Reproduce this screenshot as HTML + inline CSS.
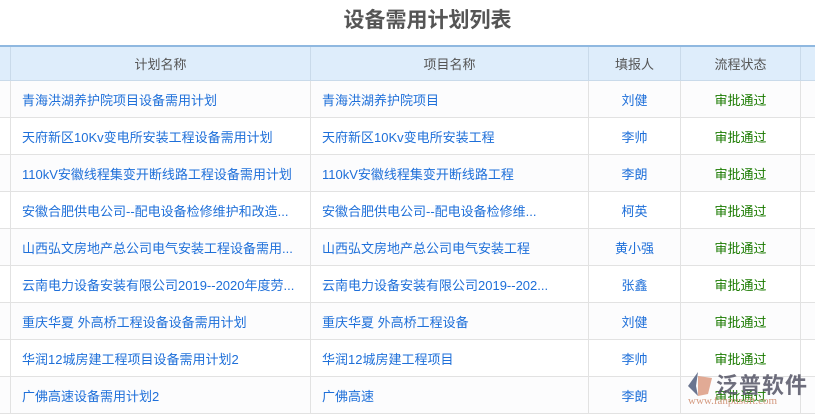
<!DOCTYPE html>
<html><head><meta charset="utf-8"><style>
body{margin:0;width:815px;height:413px;overflow:hidden;background:#fff;font-family:"Liberation Sans","Noto Sans CJK SC",sans-serif;position:relative}
.t{position:absolute;top:6px;left:0;width:855px;text-align:center;font-size:21px;font-weight:bold;color:#555;line-height:30px}
table{position:absolute;top:45px;left:-1px;width:831px;border-collapse:collapse;table-layout:fixed;font-size:13px}
td,th{height:36px;border:1px solid #e2e2e2;padding:0;white-space:nowrap;overflow:hidden}
th{background:#deedfb;font-weight:normal;color:#555;border-color:#c9daea;border-top:2px solid #8fb8e0;height:33px}
td{color:#1e6fd9}
td.l{padding-left:11px}
td.c{text-align:center}
td.g{text-align:center;color:#1a7a00}
tr:nth-child(even) td{background:#fcfcfd}
.wm{position:absolute;left:716px;top:368px;font-size:22px;color:#556;opacity:.85;font-weight:bold;letter-spacing:1px}
.wm2{position:absolute;left:688px;top:395px;font-size:11px;color:#d49a80;font-family:"Liberation Serif",serif}
</style></head><body>
<div class="t">设备需用计划列表</div>
<table>
<colgroup><col style="width:11px"><col style="width:300px"><col style="width:278px"><col style="width:92px"><col style="width:120px"><col style="width:30px"></colgroup>
<tr><th></th><th>计划名称</th><th>项目名称</th><th>填报人</th><th>流程状态</th><th></th></tr>
<tr><td></td><td class="l">青海洪湖养护院项目设备需用计划</td><td class="l">青海洪湖养护院项目</td><td class="c">刘健</td><td class="g">审批通过</td><td></td></tr>
<tr><td></td><td class="l">天府新区10Kv变电所安装工程设备需用计划</td><td class="l">天府新区10Kv变电所安装工程</td><td class="c">李帅</td><td class="g">审批通过</td><td></td></tr>
<tr><td></td><td class="l">110kV安徽线程集变开断线路工程设备需用计划</td><td class="l">110kV安徽线程集变开断线路工程</td><td class="c">李朗</td><td class="g">审批通过</td><td></td></tr>
<tr><td></td><td class="l">安徽合肥供电公司--配电设备检修维护和改造...</td><td class="l">安徽合肥供电公司--配电设备检修维...</td><td class="c">柯英</td><td class="g">审批通过</td><td></td></tr>
<tr><td></td><td class="l">山西弘文房地产总公司电气安装工程设备需用...</td><td class="l">山西弘文房地产总公司电气安装工程</td><td class="c">黄小强</td><td class="g">审批通过</td><td></td></tr>
<tr><td></td><td class="l">云南电力设备安装有限公司2019--2020年度劳...</td><td class="l">云南电力设备安装有限公司2019--202...</td><td class="c">张鑫</td><td class="g">审批通过</td><td></td></tr>
<tr><td></td><td class="l">重庆华夏 外高桥工程设备设备需用计划</td><td class="l">重庆华夏 外高桥工程设备</td><td class="c">刘健</td><td class="g">审批通过</td><td></td></tr>
<tr><td></td><td class="l">华润12城房建工程项目设备需用计划2</td><td class="l">华润12城房建工程项目</td><td class="c">李帅</td><td class="g">审批通过</td><td></td></tr>
<tr><td></td><td class="l">广佛高速设备需用计划2</td><td class="l">广佛高速</td><td class="c">李朗</td><td class="g">审批通过</td><td></td></tr>
</table>
<svg style="position:absolute;left:684px;top:370px" width="30" height="28"><path d="M14 2 L4 16 L14 26 L12 16 Z" fill="#6a7590"/><path d="M14 6 L28 8 L24 24 L14 26 Z" fill="#d9957a" opacity=".8"/></svg>
<div class="wm">泛普软件</div>
<div class="wm2">www.fanpusoft.com</div>
</body></html>
